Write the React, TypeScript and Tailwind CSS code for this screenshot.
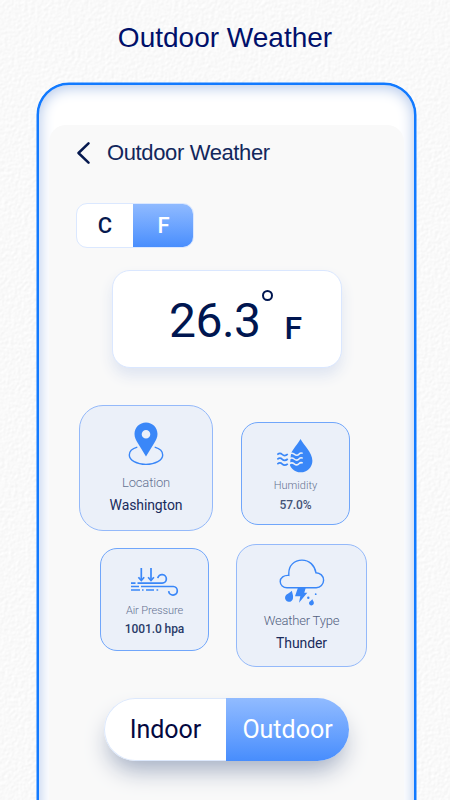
import React from "react";

function Label({ className, children }: { className: string; children: React.ReactNode }) {
  return <div className={"whitespace-nowrap text-center " + className}>{children}</div>;
}

function PaperTexture() {
  return (
    <svg className="absolute inset-0" width="450" height="800" aria-hidden="true">
      <filter id="paper" x="0" y="0" width="100%" height="100%" colorInterpolationFilters="sRGB">
        <feTurbulence type="fractalNoise" baseFrequency="0.3" numOctaves="2" seed="4" result="n" />
        <feDiffuseLighting in="n" lightingColor="#fbfbfb" surfaceScale="0.11" diffuseConstant="1.125">
          <feDistantLight azimuth="225" elevation="62" />
        </feDiffuseLighting>
      </filter>
      <rect width="450" height="800" fill="#fafafa" filter="url(#paper)" />
    </svg>
  );
}

function LocationIcon() {
  return (
    <svg width="36" height="44" viewBox="0 0 36 44" fill="none">
      <path
        fillRule="evenodd"
        fill="#3a87f8"
        d="M18 .5C11.6.5 6.500 5.600 6.500 12c0 3.300 1.500 6.300 3.400 9.200L18 34.500l8.100-13.300c1.900-2.900 3.400-5.900 3.400-9.200C29.500 5.600 24.400.5 18 .5Zm0 7.500a4.300 4.300 0 1 1 0 8.600A4.300 4.300 0 0 1 18 8Z"
      />
      <path d="M9.300 25.200C4.400 26.600 1.300 29.600 1.300 33c0 5.300 7.400 9.400 16.700 9.400S34.700 38.300 34.700 33c0-3.400-3.100-6.400-8-7.800" stroke="#3a87f8" strokeWidth="1.400" />
    </svg>
  );
}

function HumidityIcon() {
  return (
    <svg width="37" height="34" viewBox="0 0 37 34" fill="none">
      <path d="M23.500 0C20.500 6 12 13.500 12 21.700A11.700 11.700 0 0 0 23.700 33.300 11.700 11.700 0 0 0 35.400 21.700C35.400 13.500 26.500 6 23.500 0Z" fill="#3a87f8" />
      <path d="M10.700 13h3.400l-1.300 15h-2.100Z" fill="#ebf0f9" />
      <g stroke="#3a87f8" strokeWidth="1.700">
        <path d="M.3 15.500c2-1.700 3.500-1.500 5 0s3.500 1.300 5.500-.3" />
        <path d="M.3 20.300c2-1.700 3.500-1.500 5 0s3.500 1.300 5.500-.3" />
        <path d="M.3 25.100c2-1.700 3.500-1.500 5 0s3.500 1.300 5.500-.3" />
      </g>
      <g stroke="#ebf0f9" strokeWidth="1.500">
        <path d="M12 15.500c2-1.700 3.500-1.700 5.200-.3s3.700 1.300 5-.2 2.600-1 3.500-.6" />
        <path d="M12 20.300c2-1.700 3.500-1.700 5.200-.3s3.700 1.300 5-.2 2.600-1 3.500-.6" />
        <path d="M12 25.100c2-1.700 3.500-1.700 5.200-.3s3.700 1.300 5-.2 2.600-1 3.500-.6" />
      </g>
    </svg>
  );
}

function PressureIcon() {
  return (
    <svg width="48" height="29" viewBox="0 0 48 29" fill="none" stroke="#3a87f8" strokeWidth="1.700">
      <path d="M10.300 0v12M20 0v12" />
      <path d="M7.400 9.200l2.900 3.300 2.900-3.300M17.100 9.200l2.900 3.300 2.900-3.300" />
      <path d="M0 15.200h4.500M6.500 15.200h24.700a4.300 4.300 0 1 0-4.400-5" />
      <path d="M0 18.500h8M10 18.500h32.300a4.300 4.300 0 1 1-4.600 4.600" />
      <path d="M0 22h9M11 22h1.600M15 22h8M25.500 22h1.700" />
    </svg>
  );
}

function ThunderIcon() {
  return (
    <svg width="46" height="47" viewBox="0 0 46 47" fill="none">
      <path
        d="M8 28.700h29.300a7.600 7.600 0 0 0 7.300-7.500c0-4.300-3.400-7.400-7.700-7.500C35.700 6.300 30.300 1.100 23 1.100c-8 0-13.200 5.700-13.200 13.100v2.200C5 16 1.200 18.700 1.200 22.600c0 3.400 3 6.100 6.800 6.100Z"
        stroke="#3a87f8"
        strokeWidth="1.400"
      />
      <g fill="#3a87f8">
        <path d="M19 28.500h7.800l-1.500 5.300h3L20 43.700l1.300-6.500h-5.300Z" />
        <path d="M12.900 31.800c.1 2.200 1.600 4.100 1.100 7.400a4 4 0 0 1-4.600 3.600 4 4 0 0 1-3.300-4.800c.7-2.900 4.700-3.700 6.800-6.200Z" />
        <path d="M33.200 40c.3 1.500 1.900 2.400 1.700 4.300a2.500 2.500 0 0 1-4.900.2c-.1-2.200 2.400-2.600 3.200-4.500Z" />
        <circle cx="29.300" cy="38.700" r="1.200" />
        <circle cx="36.700" cy="35.200" r=".9" />
      </g>
    </svg>
  );
}

export default function App() {
  return (
    <div className="relative h-[800px] w-[450px] overflow-hidden bg-[#fafafa] font-['Roboto',sans-serif]">
      <PaperTexture />
      <div className="relative flex h-full flex-col">
        <h1 className="h-[83px] shrink-0 pt-[22px] text-center font-['Liberation_Sans',sans-serif] text-[28px] leading-[32px] text-[#00106a]">
          Outdoor Weather
        </h1>

        <div className="ml-[37px] h-[760px] w-[379px] shrink-0 rounded-t-[32px] border-2 border-[#127aff] bg-white px-[10px] pt-[40px] shadow-[0_0_0_0.5px_#127aff,inset_0_2px_14px_1px_#b6caeb]">
          <div className="h-[720px] rounded-t-[17px] bg-[#f9f9f9] pl-[27px]">
            <header className="flex h-[78px] items-start text-[#06194f]">
              <svg className="mt-[16px]" width="14" height="24" viewBox="0 0 14 24" fill="none">
                <path d="M12.500 2.300 2.500 12l10 9.700" stroke="currentColor" strokeWidth="2.500" strokeLinecap="round" strokeLinejoin="round" />
              </svg>
              <h2 className="ml-[17px] mt-[15px] font-['Liberation_Sans',sans-serif] text-[22px] leading-[25px] tracking-[-0.370px] text-[#12275c]">
                Outdoor Weather
              </h2>
            </header>

            <div className="flex h-[45px] w-[118px] overflow-hidden rounded-[11px] border border-[#dbe8ff] bg-white text-[22px] font-medium leading-[44px]">
              <button className="w-[56px] text-[#06194f]">C</button>
              <button className="-my-px -mr-px flex-1 bg-gradient-to-b from-[#91bbff] to-[#478dfd] text-white">F</button>
            </div>

            <section className="ml-[36px] mt-[22px] flex h-[98px] w-[230px] items-start rounded-[18px] border border-[#dae7ff] bg-white pl-[56px] text-[#001650] shadow-[0_8px_14px_#dfe5f1]">
              <span className="mt-[22px] w-[92.500px] text-[48px] leading-[56px] tracking-[-0.500px]">26.3</span>
              <span className="mt-[19px] h-[11px] w-[11px] rounded-full border-2 border-[#001650]" />
              <span className="ml-[12px] mt-[37px] text-[32px] font-medium leading-[40px]">F</span>
            </section>

            <div className="ml-[3px] mt-[37px] flex items-start">
              <article className="flex h-[126px] w-[134px] flex-col items-center rounded-[24px] border border-[#94b9fa] bg-[#ebf0f9] pt-[16px]">
                <LocationIcon />
                <Label className="mt-[9px] text-[13px] font-light leading-[16px] tracking-[-0.150px] text-[#657291]">Location</Label>
                <Label className="mt-[6px] text-[14px] leading-[16px] tracking-[-0.100px] text-[#1a2b5c]">Washington</Label>
              </article>
              <article className="ml-[28px] mt-[17px] flex h-[103px] w-[109px] flex-col items-center rounded-[17px] border border-[#70a6fb] bg-[#ebf0f9] pt-[16px]">
                <HumidityIcon />
                <Label className="mt-[6px] text-[11px] font-light leading-[14px] text-[#657291]">Humidity</Label>
                <Label className="mt-[5px] text-[12px] font-medium leading-[14px] tracking-[-0.100px] text-[#445377]">57.0%</Label>
              </article>
            </div>

            <div className="ml-[24px] mt-[13px] flex items-start">
              <article className="mt-[4px] flex h-[103px] w-[109px] flex-col items-center rounded-[17px] border border-[#70a6fb] bg-[#ebf0f9] pt-[19px]">
                <PressureIcon />
                <Label className="mt-[7px] text-[11px] font-light leading-[14px] tracking-[-0.100px] text-[#657291]">Air Pressure</Label>
                <Label className="mt-[4px] text-[12px] font-medium leading-[14px] tracking-[-0.100px] text-[#293b68]">1001.0 hpa</Label>
              </article>
              <article className="ml-[27px] flex h-[123px] w-[131px] flex-col items-center rounded-[20px] border border-[#94b9fa] bg-[#ebf0f9] pt-[14px]">
                <ThunderIcon />
                <Label className="mt-[7px] text-[13px] font-light leading-[16px] tracking-[-0.200px] text-[#526080]">Weather Type</Label>
                <Label className="mt-[6px] text-[14px] leading-[16px] tracking-[-0.100px] text-[#1a2b5c]">Thunder</Label>
              </article>
            </div>

            <div className="ml-[28px] mt-[31px] flex h-[63px] w-[245px] rounded-full bg-white text-[25px] shadow-[0_14px_24px_-5px_#a2adc2]">
              <button className="w-[122px] rounded-l-full border-y border-l border-[#dce8fc] text-[#03083f]">Indoor</button>
              <button className="flex-1 rounded-r-full bg-gradient-to-b from-[#91bbff] to-[#478dfd] text-[25px] text-white">Outdoor</button>
            </div>
          </div>
        </div>
      </div>
    </div>
  );
}
